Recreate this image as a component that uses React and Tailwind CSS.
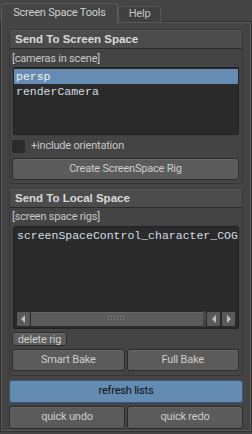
import React from 'react';

function Btn({ label, className = '', blue = false }) {
  return (
    <div
      className={`flex items-center justify-center rounded-[3px] border ${
        blue
          ? 'border-[#3b5670] bg-[#648bb2] text-[#101010]'
          : 'border-[#2c2c2c] bg-[#5b5b5b] text-[#cdcdcd] shadow-[inset_0_1px_0_#686868]'
      } ${className}`}
    >
      {label}
    </div>
  );
}

function Frame({ title, children }) {
  return (
    <div className="ml-[7px] w-[234px] border border-[#373737] rounded-[2px]">
      <div className="h-[19px] flex items-center pl-[5px] bg-[#4c4c4c] border-b border-[#2a2a2a] border-t border-t-[#5a5a5a] font-['Liberation_Sans',sans-serif] font-bold text-[11.5px] tracking-normal text-[#dadada]">
        {title}
      </div>
      <div className="pl-[2px] pr-[3px]">{children}</div>
    </div>
  );
}

function Arrow({ dir }) {
  return (
    <svg width="6" height="8" viewBox="0 0 6 8">
      {dir === 'left'
        ? <polygon points="5,0 5,8 1,4" fill="#bdbdbd" />
        : <polygon points="1,0 1,8 5,4" fill="#bdbdbd" />}
    </svg>
  );
}

function ScrollBar() {
  return (
    <div className="mx-[2px] h-[16px] flex">
      <div className="w-[15px] h-full flex items-center justify-center bg-[#5a5a5a] border border-[#2a2a2a] rounded-[2px]">
        <Arrow dir="left" />
      </div>
      <div className="w-[174px] h-full flex items-center justify-center bg-[#5b5b5b] border-y border-[#2a2a2a] shadow-[inset_0_1px_0_#676767]">
        <svg width="18" height="6" viewBox="0 0 18 6">
          {[0, 3, 6, 9, 12, 15].map(x => (
            <React.Fragment key={x}>
              <rect x={x} y="0" width="1" height="1" fill="#8a8a8a" />
              <rect x={x} y="3" width="1" height="1" fill="#8a8a8a" />
            </React.Fragment>
          ))}
        </svg>
      </div>
      <div className="w-[3px] h-full bg-[repeating-linear-gradient(45deg,#3a3a3a_0px,#3a3a3a_1px,#555_1px,#555_2px)]" />
      <div className="w-[15px] h-full flex items-center justify-center bg-[#5a5a5a] border border-[#2a2a2a] rounded-[2px]">
        <Arrow dir="left" />
      </div>
      <div className="w-[15px] h-full flex items-center justify-center bg-[#5a5a5a] border border-[#2a2a2a] rounded-[2px]">
        <Arrow dir="right" />
      </div>
    </div>
  );
}

export default function App() {
  return (
    <div className="w-[252px] h-[434px] bg-[#444444] overflow-hidden font-['Roboto',sans-serif] text-[11px] tracking-[-0.2px] text-[#c8c8c8]">
      {/* Tabs */}
      <div className="flex items-end h-[22px] pl-[1px] pt-[2px]">
        <div className="w-[117px] h-[20px] -mb-px relative z-10 flex items-center justify-center bg-[#444444] border border-b-0 border-[#5c5c5c] rounded-t-[3px] text-[#cfcfcf]">
          Screen Space Tools
        </div>
        <div className="w-[43px] h-[16px] flex items-center justify-center bg-[#404040] border border-b-0 border-[#555] rounded-t-[3px] text-[#c4c4c4]">
          Help
        </div>
      </div>

      {/* Pane */}
      <div className="mx-[1px] h-[409px] border border-[#5a5a5a] shadow-[0_0_0_1px_#303030] pt-[6px]">
        <Frame title="Send To Screen Space">
          <div className="mt-[3px] h-[14px] leading-[14px]">[cameras in scene]</div>
          <div className="mt-[1px] ml-[1px] h-[68px] bg-[#2a2a2a] border border-[#222] rounded-[2px] pt-px font-['Liberation_Mono',monospace] text-[11.5px] tracking-normal text-[#d6dde6]">
            <div className="h-[15px] leading-[15px] pl-[2px] bg-[#678cb3] text-[#f0f0f0]">persp</div>
            <div className="h-[15px] leading-[15px] pl-[2px]">renderCamera</div>
          </div>
          <div className="mt-[5px] h-[13px] flex items-center">
            <div className="w-[13px] h-[13px] bg-[#2b2b2b] rounded-[2px]" />
            <span className="ml-[6px]">+include orientation</span>
          </div>
          <Btn label="Create ScreenSpace Rig" className="mt-[5px] h-[22px]" />
          <div className="h-[3px]" />
        </Frame>

        <div className="h-[4px]" />

        <Frame title="Send To Local Space">
          <div className="mt-[2px] h-[14px] leading-[14px]">[screen space rigs]</div>
          <div className="mt-[2px] ml-[1px] h-[103px] flex flex-col bg-[#2a2a2a] border border-[#222] rounded-[2px] pt-px font-['Liberation_Mono',monospace] text-[11.5px] tracking-normal text-[#d6dde6]">
            <div className="h-[15px] leading-[15px] pl-[3px] whitespace-nowrap overflow-hidden">screenSpaceControl_character_COG</div>
            <div className="flex-1" />
            <ScrollBar />
            <div className="h-px" />
          </div>
          <Btn label="delete rig" className="mt-[3px] w-[55px] h-[14px] leading-none" />
          <div className="mt-[3px] flex gap-[2px]">
            <Btn label="Smart Bake" className="w-[113px] h-[22px]" />
            <Btn label="Full Bake" className="w-[113px] h-[22px]" />
          </div>
          <div className="h-[4px]" />
        </Frame>

        <div className="ml-[7px] w-[234px] mt-[4px]">
          <Btn blue label="refresh lists" className="h-[23px]" />
          <div className="mt-[3px] flex gap-[2px]">
            <Btn label="quick undo" className="w-[116px] h-[23px]" />
            <Btn label="quick redo" className="w-[116px] h-[23px]" />
          </div>
        </div>
      </div>
    </div>
  );
}
